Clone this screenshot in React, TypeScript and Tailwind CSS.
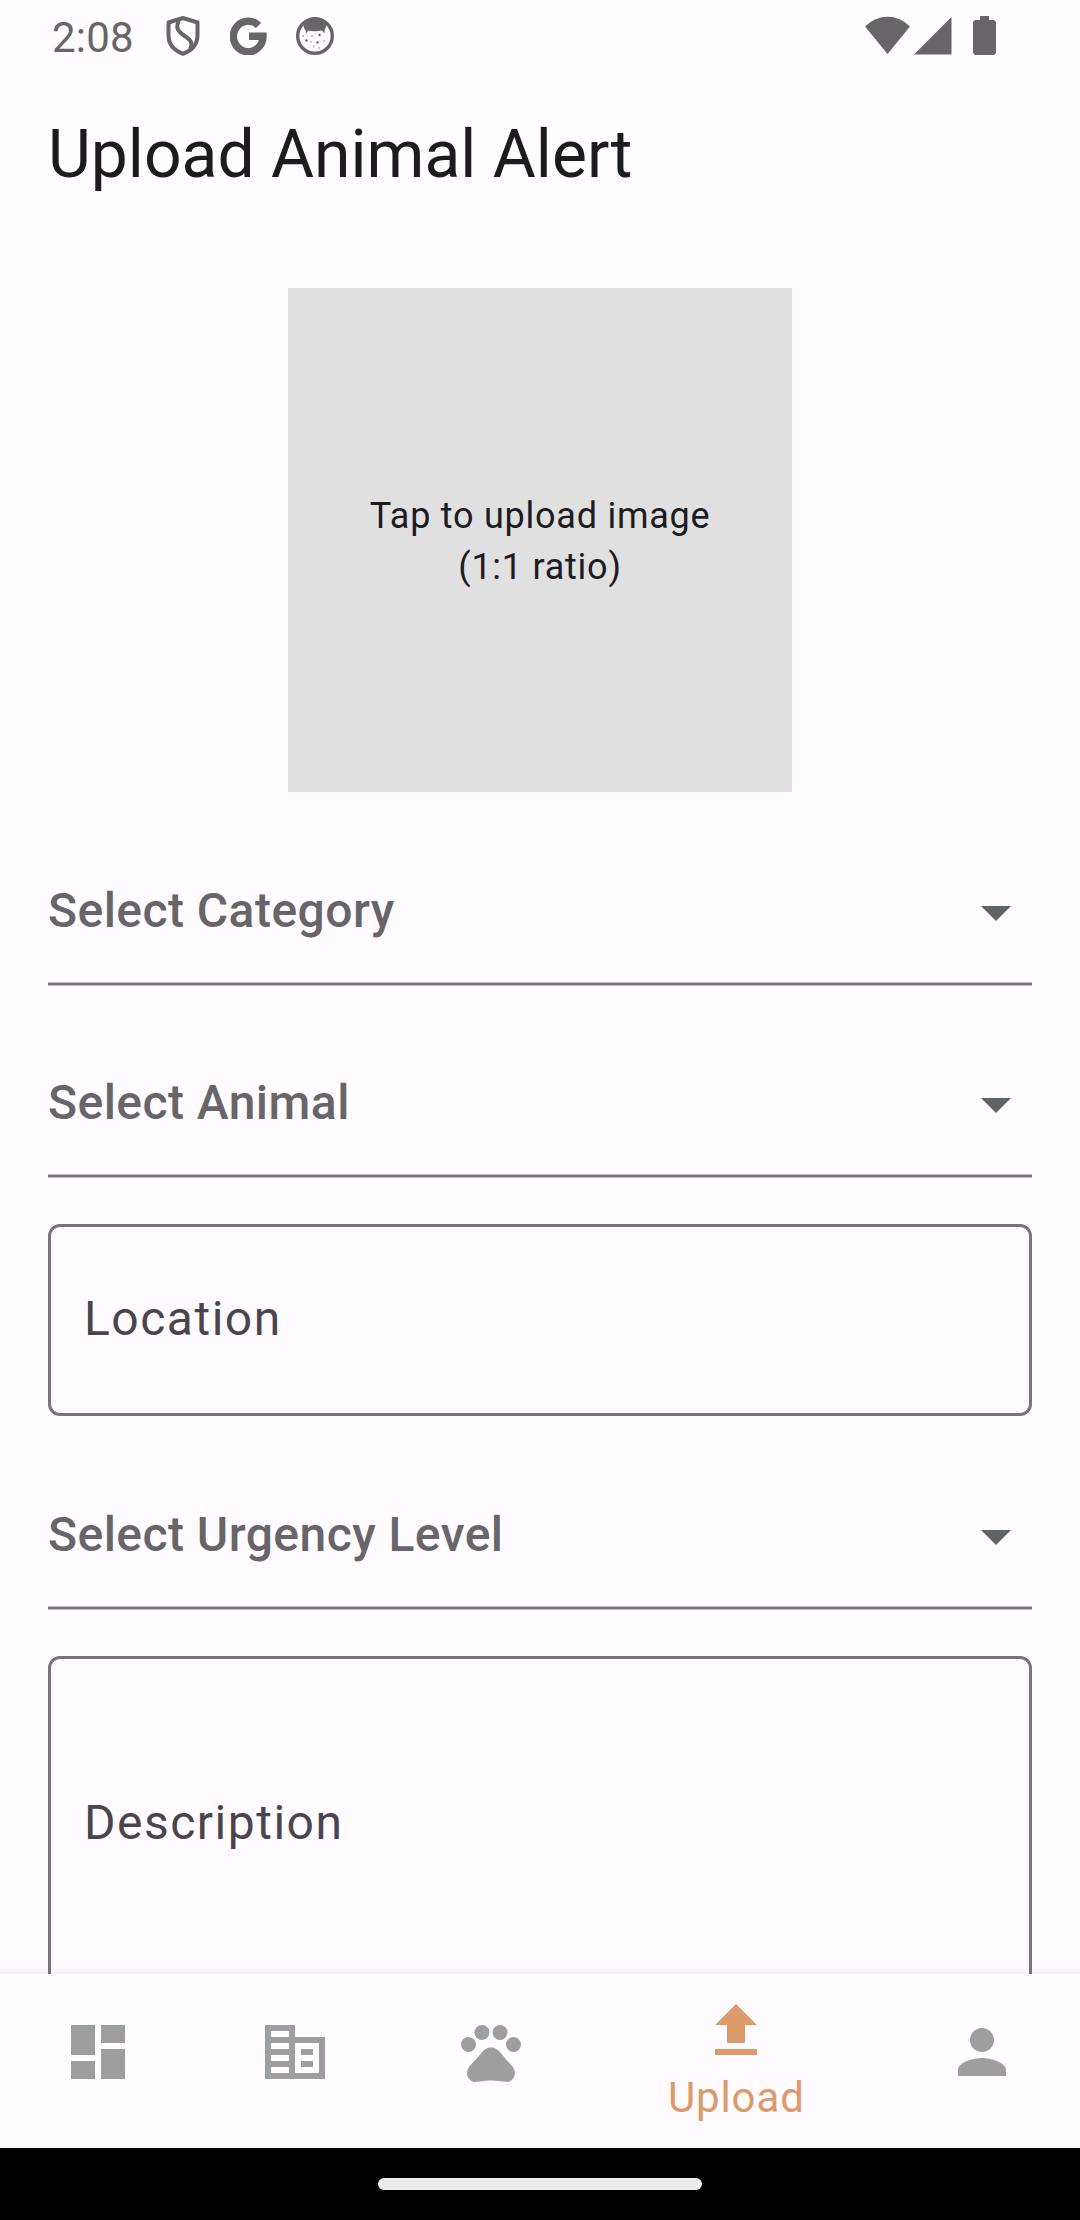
import React from "react";

function StatusBar() {
  return (
    <header className="flex h-[72px] shrink-0 items-start justify-between pr-[84px] pl-[52px] text-[#676569]">
      <div className="flex h-[72px] items-start">
        <span className="mt-[12px] w-[114px] text-[42px] leading-[51px] tracking-[0.2px]">2:08</span>
        <svg className="mt-4 h-10 w-[34px]" viewBox="0 0 34 40" fill="none" stroke="currentColor" strokeWidth="4" strokeLinejoin="round">
          <path d="M17 2 L31.500 6.500 V19 C31.500 28 26 34.500 17 37.800 C8 34.500 2.500 28 2.500 19 V6.500 Z" />
          <path d="M13 3.800 C9.500 12 11.500 15 18 19.500 C26 24.500 27 28 24 33.500" />
        </svg>
        <svg className="mt-[17px] ml-[30px] h-[38px] w-[37px]" viewBox="0 0 37 38" fill="none" stroke="currentColor" strokeWidth="7.400">
          <path d="M28.500 8.500 A14.800 15.300 0 1 0 33 19.300 H19" />
        </svg>
        <svg className="mt-[17px] ml-[29px] h-[38px] w-[38px]" viewBox="0 0 38 38" fill="currentColor">
          <circle cx="19" cy="19" r="17.300" fill="none" stroke="currentColor" strokeWidth="3.400" />
          <path d="M7 7 Q19 -2 31 7 L29 12 Q28.500 13 28.500 16.500 L26 13.500 Q19 15 12 13.500 L10 17 Q10 13 8.500 12 Z" />
          <circle cx="10.500" cy="23.500" r="1.200" />
          <circle cx="23.500" cy="18" r="1.200" />
          <circle cx="21.500" cy="25.500" r="1.200" />
          <g opacity="0.450">
            <circle cx="16" cy="19" r="1" />
            <circle cx="15" cy="25" r="1" />
            <circle cx="18" cy="29.500" r="1" />
            <circle cx="28" cy="24" r="1" />
            <circle cx="23" cy="31" r="1" />
            <circle cx="7" cy="19" r="1" />
          </g>
        </svg>
      </div>
      <div className="flex items-start pt-4">
        <svg className="h-[39px] w-[45px]" viewBox="0 0 45 39" fill="currentColor">
          <path d="M0 10.500 Q10 .800 22.500 .800 Q35 .800 45 10.500 L22.500 38 Z" />
        </svg>
        <svg className="ml-1 h-[39px] w-[38px]" viewBox="0 0 38 39" fill="currentColor">
          <path d="M37.500 1 V38.500 H0 Z" />
        </svg>
        <svg className="ml-[21px] h-[39px] w-[23px]" viewBox="0 0 23 39" fill="currentColor">
          <path d="M7 0 H16 V4 H21 L23 6 V37 L21 39 H2 L0 37 V6 L2 4 H7 Z" />
        </svg>
      </div>
    </header>
  );
}

function SelectField({ label }: { label: string }) {
  return (
    <div className="flex h-48 shrink-0 flex-col">
      <div className="flex h-[166px] items-start justify-between pt-[60px]">
        <span className="mt-[6px] text-[48px] leading-[57px] font-medium tracking-[0.45px] text-[#676569]">{label}</span>
        <svg className="h-[72px] w-[72px]" viewBox="0 0 24 24" fill="#616161">
          <path d="M7 10l5 5 5-5z" />
        </svg>
      </div>
      <div className="h-1 border-y border-[#bbb8bf] bg-[#79747e]" />
    </div>
  );
}

function NavItem({ d }: { d: string }) {
  return (
    <div className="flex flex-1 justify-center pt-[42px]">
      <svg className="h-[72px] w-[72px]" viewBox="0 0 24 24" fill="#9e9e9e">
        <path d={d} />
      </svg>
    </div>
  );
}

function PawItem() {
  return (
    <div className="flex flex-1 justify-center pt-[42px]">
      <svg className="h-[72px] w-[72px]" viewBox="0 0 24 24" fill="#9e9e9e">
        <circle cx="4.500" cy="9.500" r="2.500" />
        <circle cx="9" cy="5.500" r="2.500" />
        <circle cx="15" cy="5.500" r="2.500" />
        <circle cx="19.500" cy="9.500" r="2.500" />
        <path d="M17.340 14.860c-.870-1.020-1.600-1.890-2.480-2.910-.460-.540-1.050-1.080-1.750-1.320-.110-.040-.220-.070-.330-.090-.250-.040-.520-.040-.780-.040s-.530 0-.790.050c-.110.020-.220.050-.330.090-.700.240-1.280.780-1.750 1.320-.870 1.020-1.600 1.890-2.480 2.910-1.310 1.310-2.920 2.760-2.620 4.790.290 1.020 1.020 2.030 2.330 2.320.730.150 3.060-.440 5.540-.440h.180c2.480 0 4.810.580 5.540.440 1.310-.290 2.040-1.310 2.330-2.320.310-2.040-1.300-3.490-2.610-4.800z" />
      </svg>
    </div>
  );
}

export default function App() {
  return (
    <div className="flex h-[2220px] w-[1080px] flex-col overflow-hidden bg-[#fffbff] font-['Roboto',sans-serif]">
      <StatusBar />
      <h1 className="h-[168px] shrink-0 pt-[43px] pl-12 text-[66px] leading-[79px] text-[#1c1b1f]">Upload Animal Alert</h1>
      <main className="flex min-h-0 flex-1 flex-col overflow-hidden px-12 pt-12">
        <button className="mb-6 flex h-[504px] w-[504px] shrink-0 items-center justify-center self-center bg-[#e0e0e0] pt-[3px] text-center text-[36px] leading-[51px] tracking-[0.75px] text-[#1c1b1f]">
          <span>
            Tap to upload image
            <br />
            (1:1 ratio)
          </span>
        </button>
        <SelectField label="Select Category" />
        <SelectField label="Select Animal" />
        <div className="mt-6 flex h-48 shrink-0 items-start rounded-[12px] border-[3px] border-[#79747e] pt-[62px] pl-[33px]">
          <span className="text-[48px] leading-[59px] tracking-[1.5px] text-[#49454f]">Location</span>
        </div>
        <div className="mt-6 shrink-0">
          <SelectField label="Select Urgency Level" />
        </div>
        <div className="mt-6 flex h-[400px] shrink-0 items-start rounded-[12px] border-[3px] border-[#79747e] pt-[134px] pl-[33px]">
          <span className="text-[48px] leading-[59px] tracking-[1.5px] text-[#49454f]">Description</span>
        </div>
      </main>
      <nav className="relative flex h-[174px] shrink-0 bg-[#fffbff]">
        <div className="absolute inset-x-0 -top-[8px] h-[8px] bg-gradient-to-t from-black/5 to-transparent" />
        <NavItem d="M3 13h8V3H3v10zm0 8h8v-6H3v6zm10 0h8V11h-8v10zm0-18v6h8V3h-8z" />
        <NavItem d="M12 7V3H2v18h20V7H12zm-2 12H4v-2h6v2zm0-4H4v-2h6v2zm0-4H4V9h6v2zm0-4H4V5h6v2zm10 12h-8V9h8v10zm-2-8h-4v2h4v-2zm0 4h-4v2h4v-2z" />
        <PawItem />
        <div className="flex flex-[1.5] flex-col items-center pt-[21px]">
          <svg className="h-[72px] w-[72px]" viewBox="0 0 24 24" fill="#dc9a6b">
            <path d="M9 16h6v-6h4l-7-7-7 7h4zm-4 2h14v2H5z" />
          </svg>
          <span className="text-[42px] leading-[61px] tracking-[0.9px] text-[#dc9a6b]">Upload</span>
        </div>
        <NavItem d="M12 12c2.210 0 4-1.790 4-4s-1.790-4-4-4-4 1.790-4 4 1.790 4 4 4zm0 2c-2.670 0-8 1.340-8 4v2h16v-2c0-2.660-5.330-4-8-4z" />
      </nav>
      <footer className="flex h-[72px] shrink-0 justify-center bg-black pt-[30px]">
        <div className="h-3 w-[324px] rounded-full bg-[#ececec]" />
      </footer>
    </div>
  );
}
